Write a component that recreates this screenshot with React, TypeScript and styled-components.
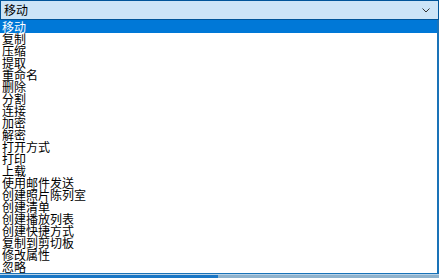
import * as React from "react";
import styled, { createGlobalStyle } from "styled-components";

const GlobalStyle = createGlobalStyle`
  html, body {
    margin: 0;
    padding: 0;
    background: #ffffff;
    overflow: hidden;
  }
  body {
    font-family: "Noto Sans CJK SC", "Noto Sans", sans-serif;
  }
`;

const Frame = styled.div`
  width: 439px;
  height: 278px;
  display: flex;
  flex-direction: column;
  background: #ffffff;
`;

const SelectBox = styled.div`
  flex: 0 0 auto;
  height: 18px;
  display: flex;
  align-items: center;
  padding: 0 8px 0 3px;
  background: #cce4f7;
  border: 1px solid #005499;
  font-size: 12px;
  color: #000000;
`;

const SelectValue = styled.span`
  flex: auto;
  line-height: 18px;
`;

const Chevron = styled.svg`
  flex: 0 0 auto;
  width: 8px;
  height: 5px;
`;

const List = styled.ul`
  flex: 0 0 auto;
  margin: 0;
  padding: 0;
  list-style: none;
  border-right: 2px solid #1a73b8;
  border-bottom: 1px solid #1a73b8;
  height: 253px;
  overflow: hidden;
`;

const Item = styled.li<{ selected?: boolean }>`
  height: 12px;
  line-height: 12px;
  font-size: 12px;
  padding-left: 2px;
  white-space: nowrap;
  color: ${(p) => (p.selected ? "#ffffff" : "#000000")};
  background: ${(p) => (p.selected ? "#0078d7" : "transparent")};

  &:first-child {
    height: 13px;
    line-height: 13px;
  }
`;

const Taskbar = styled.div`
  flex: auto;
  display: flex;
  flex-direction: column;
  border-top: 1px solid #b9d3e8;
`;

const TaskRow = styled.div`
  flex: auto;
  display: flex;
`;

const TaskActive = styled.div`
  width: 218px;
  background: #1a76c4;
`;

const TaskRest = styled.div`
  flex: auto;
  background: #8fb2cc;
`;

const items = [
  "移动",
  "复制",
  "压缩",
  "提取",
  "重命名",
  "删除",
  "分割",
  "连接",
  "加密",
  "解密",
  "打开方式",
  "打印",
  "上载",
  "使用邮件发送",
  "创建照片陈列室",
  "创建清单",
  "创建播放列表",
  "创建快捷方式",
  "复制到剪切板",
  "修改属性",
  "忽略",
];

function App() {
  return (
    <>
      <GlobalStyle />
      <Frame>
        <SelectBox>
          <SelectValue>移动</SelectValue>
          <Chevron viewBox="0 0 8 5">
            <path d="M0.5 0.5 L4 4 L7.5 0.5" fill="none" stroke="#333" strokeWidth="1" />
          </Chevron>
        </SelectBox>
        <List>
          {items.map((label, i) => (
            <Item key={label} selected={i === 0}>
              {label}
            </Item>
          ))}
        </List>
        <Taskbar>
          <TaskRow>
            <TaskActive />
            <TaskRest />
          </TaskRow>
        </Taskbar>
      </Frame>
    </>
  );
}

export default App;
